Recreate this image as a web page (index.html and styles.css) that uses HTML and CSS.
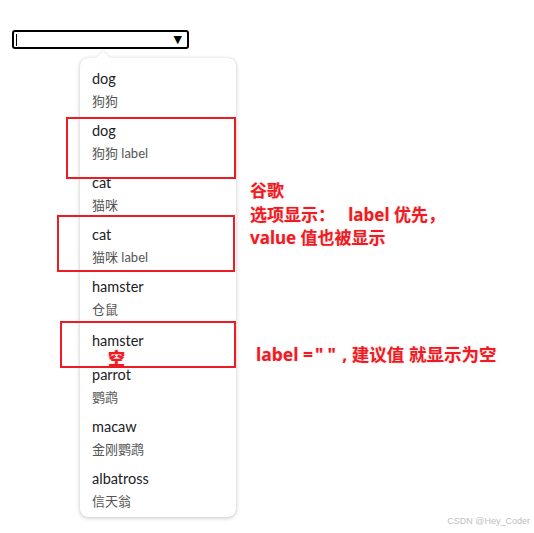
FILE: index.html
```html
<!DOCTYPE html>
<html lang="zh-CN">
<head>
<meta charset="utf-8">
<title>datalist</title>
<link rel="stylesheet" href="styles.css">
</head>
<body>
<div class="page">
  <div class="field">
    <span class="cursor"></span>
    <span class="arrow">▼</span>
  </div>
  <div class="popup">
    <div class="opt"><div class="val">dog</div><div class="lab">狗狗</div></div>
    <div class="opt"><div class="val">dog</div><div class="lab">狗狗 label</div></div>
    <div class="opt"><div class="val">cat</div><div class="lab">猫咪</div></div>
    <div class="opt"><div class="val">cat</div><div class="lab">猫咪 label</div></div>
    <div class="opt"><div class="val">hamster</div><div class="lab">仓鼠</div></div>
    <div class="opt opt-empty"><div class="val">hamster</div></div>
    <div class="opt"><div class="val">parrot</div><div class="lab">鹦鹉</div></div>
    <div class="opt"><div class="val">macaw</div><div class="lab">金刚鹦鹉</div></div>
    <div class="opt"><div class="val">albatross</div><div class="lab">信天翁</div></div>
  </div>

  <div class="mark mark-1"></div>
  <div class="mark mark-2"></div>
  <div class="mark mark-3"></div>

  <div class="note note-1">谷歌<br>选项显示：&nbsp;&nbsp;&nbsp;label 优先，<br>value 值也被显示</div>
  <div class="note note-2">label =<span class="q">"</span><span class="q">"</span>&nbsp;, 建议值 就显示为空</div>
  <div class="note note-empty">空</div>

  <div class="watermark">CSDN @Hey_Coder</div>
</div>
</body>
</html>
```

FILE: styles.css
```css
html, body {
  margin: 0;
  padding: 0;
  background: #ffffff;
}

.page {
  position: relative;
  width: 534px;
  height: 533px;
  overflow: hidden;
  font-family: Lato, "Noto Sans CJK SC", sans-serif;
}

.field {
  margin: 30px 0 0 12px;
  width: 177px;
  height: 19px;
  box-sizing: border-box;
  border: 2px solid #000;
  border-radius: 3px;
  display: flex;
  align-items: center;
  justify-content: space-between;
  padding: 0 5px 0 2px;
}

.cursor {
  width: 1px;
  height: 12px;
  background: #000;
}

.arrow {
  font-family: "DejaVu Sans", sans-serif;
  font-size: 11px;
  line-height: 11px;
  color: #000;
}

.popup {
  position: relative;
  margin: 9px 0 0 80px;
  width: 156px;
  height: 459px;
  box-sizing: border-box;
  padding: 5px 0 0 0;
  background: #fff;
  border-radius: 8px;
  box-shadow: 0 1px 4px rgba(0, 0, 0, 0.22), 0 0 1px rgba(0, 0, 0, 0.15);
}

.popup::before {
  content: "";
  position: absolute;
  top: -5px;
  left: 18px;
  width: 10px;
  height: 10px;
  background: #fff;
  transform: rotate(45deg);
  box-shadow: -1px -1px 2px rgba(0, 0, 0, 0.08);
}

.opt {
  position: relative;
  height: 52px;
  box-sizing: border-box;
  padding: 6px 12px 4px 12px;
}

.opt-empty {
  height: 36px;
  padding-top: 8px;
}

.val {
  font-size: 14.5px;
  line-height: 20px;
  color: #202124;
}

.lab {
  margin-top: 2px;
  font-size: 13px;
  line-height: 20px;
  color: #555;
}

.mark {
  position: absolute;
  border: 2px solid #ed1c24;
  box-sizing: border-box;
}

.mark-1 { left: 66px; top: 117px; width: 170px; height: 62px; }
.mark-2 { left: 57px; top: 215px; width: 178px; height: 57px; }
.mark-3 { left: 60px; top: 321px; width: 176px; height: 47px; }

.note {
  position: absolute;
  font-family: "Noto Sans", "Noto Sans CJK SC", sans-serif;
  font-weight: bold;
  font-size: 17px;
  line-height: 23.5px;
  color: #ed1c24;
  text-shadow: 0 0 2px rgba(237, 28, 36, 0.25);
  white-space: nowrap;
}

.note-1 { left: 250px; top: 179px; }
.note-2 { left: 256px; top: 343px; font-size: 17.5px; }
.note-2 .q { margin: 0 2px; }
.note-empty { left: 108px; top: 346px; font-size: 17px; font-family: "Noto Sans CJK SC", sans-serif; font-weight: 900; }

.watermark {
  position: absolute;
  right: 4px;
  bottom: 7px;
  font-family: "Liberation Sans", Arial, sans-serif;
  font-size: 9px;
  color: #c0c0c0;
}
```
